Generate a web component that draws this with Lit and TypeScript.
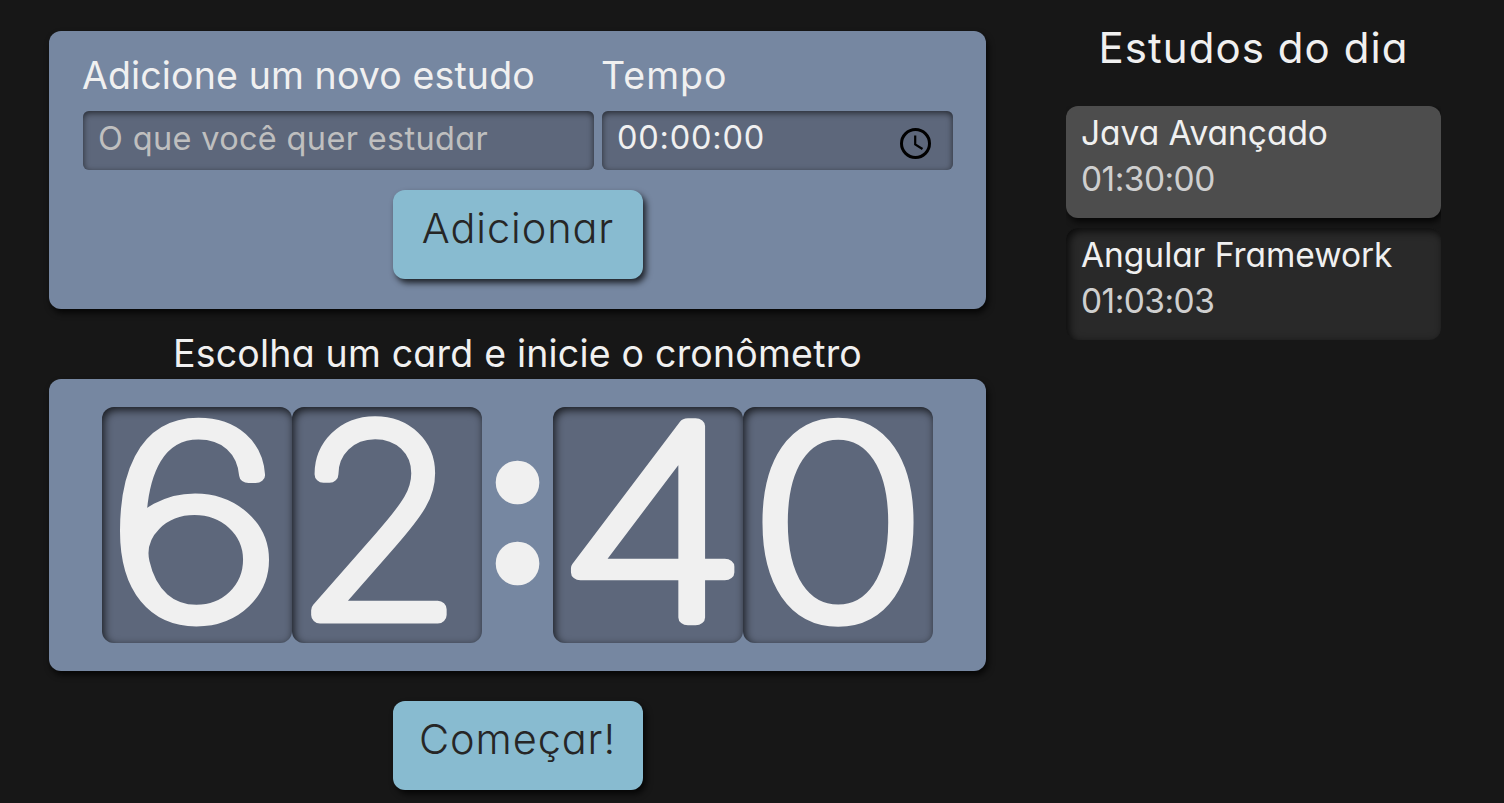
import { LitElement, html, css, svg } from "lit";
import { customElement, property, state } from "lit/decorators.js";

interface Study {
  name: string;
  time: string;
  selected: boolean;
}

// Horizontal centre, baseline, and x/y stretch of each numeral inside its tile.
const SHAPES: Record<string, [number, number, number, number]> = {
  "6": [92.5, 209, 1.2, 1],
  "2": [86.5, 208, 1.04, 1],
  "4": [99.5, 210.5, 1.25, 1.02],
  "0": [95, 209, 1.15, 1],
};

@customElement("clock-digit")
class ClockDigit extends LitElement {
  @property() value = "0";

  static styles = css`
    :host { display: block; width: 190px; height: 236px; border-radius: 12px; background: #5d677b; box-shadow: inset 2px 3px 8px rgba(0, 0, 0, 0.75); }
    svg { display: block; width: 190px; height: 236px; overflow: visible; }
    text { font-family: Inter, sans-serif; font-weight: 100; font-size: 258px; text-anchor: middle; fill: #f0f0f0; stroke: #f0f0f0; stroke-width: 17.5px; stroke-linejoin: round; vector-effect: non-scaling-stroke; }
  `;

  render() {
    const [cx, y, sx, sy] = SHAPES[this.value] ?? [95, 209, 1.1, 1];
    return html`<svg viewBox="0 0 190 236">${svg`<text transform="translate(${cx} ${y}) scale(${sx} ${sy})">${this.value}</text>`}</svg>`;
  }
}

@customElement("app-root")
class AppRoot extends LitElement {
  @state() studies: Study[] = [
    { name: "Java Avançado", time: "01:30:00", selected: true },
    { name: "Angular Framework", time: "01:03:03", selected: false },
  ];

  static styles = css`
    * { box-sizing: border-box; }
    :host { display: block; height: 803px; overflow: hidden; background: #171717; color: #f0f0f0; font-family: Inter, "Open Sans", sans-serif; font-weight: 400; font-feature-settings: "cv11", "calt" 0; }
    .page { display: flex; align-items: flex-start; gap: 80px; padding: 31px 63px 0 49px; }
    .main { width: 937px; display: flex; flex-direction: column; align-items: center; }
    .panel { width: 937px; border-radius: 12px; background: #7687a1; box-shadow: 2px 4px 6px rgba(0, 0, 0, 0.75); }
    .form { height: 278px; padding: 23px 33px 0 34px; display: flex; flex-direction: column; align-items: center; }
    .fields { width: 100%; display: grid; grid-template-columns: 511px 351px; column-gap: 8px; }
    .label { display: block; height: 57px; margin-left: -1px; line-height: 44px; font-size: 37.5px; letter-spacing: 0.13px; white-space: nowrap; }
    .l2 { letter-spacing: 1px; }
    .field { display: flex; height: 59px; border-radius: 6px; background: #5d677b; box-shadow: inset 0 2px 6px rgba(0, 0, 0, 0.6); padding: 0 22px 0 15px; }
    .input { flex: 1; min-width: 0; height: 55px; padding: 0; border: 0; outline: 0; background: none; color: #f0f0f0; font: inherit; font-size: 32.5px; letter-spacing: 0.33px; font-feature-settings: inherit; }
    .i2 { height: 53px; letter-spacing: 0.8px; }
    .input::placeholder { color: #bfbfbf; opacity: 1; }
    .clock { width: 31px; height: 31px; margin-top: 17px; }
    .button { width: 250px; height: 89px; padding: 0 0 14px; border: 0; border-radius: 12px; background: #88bbd0; color: #262626; box-shadow: 3px 4px 6px rgba(0, 0, 0, 0.75); font: inherit; font-weight: 300; font-size: 41.5px; letter-spacing: 0.9px; font-feature-settings: inherit; }
    .add { margin-top: 20px; }
    .start { margin-top: 30px; }
    .hint { margin: 0; height: 70px; padding-top: 20px; line-height: 50px; font-size: 37.5px; letter-spacing: 0.2px; font-weight: 400; white-space: nowrap; }
    .timer { height: 292px; display: flex; justify-content: center; padding-top: 28px; }
    .colon { width: 71px; height: 236px; overflow: visible; }
    .colon text { font-family: Inter, sans-serif; font-weight: 400; font-size: 205px; text-anchor: middle; fill: #f0f0f0; stroke: #f0f0f0; stroke-width: 16.5px; stroke-linejoin: round; }
    .side { width: 375px; }
    .title { margin: 0; height: 75px; line-height: 33px; font-size: 42px; letter-spacing: 1.05px; font-weight: 400; text-align: center; white-space: nowrap; }
    .list { display: flex; flex-direction: column; gap: 10px; overflow: hidden; }
    .study { height: 112px; padding: 4px 15px 0; border-radius: 12px; background: #292929; box-shadow: inset 3px 3px 8px rgba(0, 0, 0, 0.75); font-size: 33.5px; line-height: 46px; white-space: nowrap; }
    .selected { background: #4d4d4d; box-shadow: 2px 4px 6px rgba(0, 0, 0, 0.75); }
    .name { letter-spacing: -0.03px; }
    .time { color: #cfcfcf; letter-spacing: -0.55px; }
  `;

  render() {
    return html`
      <div class="page">
        <main class="main">
          <section class="panel form">
            <div class="fields">
              <label class="label l1">Adicione um novo estudo</label>
              <label class="label l2">Tempo</label>
              <div class="field"><input class="input i1" placeholder="O que você quer estudar" /></div>
              <div class="field">
                <input class="input i2" .value=${"00:00:00"} />
                <svg class="clock" viewBox="0 0 31 31" fill="none" stroke="#000">
                  <circle cx="15.5" cy="15.5" r="14" stroke-width="3" />
                  <path d="M15.2 7.5V16.5L22.5 21" stroke-width="2.2" />
                </svg>
              </div>
            </div>
            <button class="button add">Adicionar</button>
          </section>
          <h2 class="hint">Escolha um card e inicie o cronômetro</h2>
          <section class="panel timer">
            <clock-digit value="6"></clock-digit>
            <clock-digit value="2"></clock-digit>
            <svg class="colon" viewBox="0 0 71 236"><text x="35.5" y="169.3">:</text></svg>
            <clock-digit value="4"></clock-digit>
            <clock-digit value="0"></clock-digit>
          </section>
          <button class="button start">Começar!</button>
        </main>
        <aside class="side">
          <h2 class="title">Estudos do dia</h2>
          <div class="list">
            ${this.studies.map(
              (s) => html`<div class="study ${s.selected ? "selected" : ""}">
                <div class="name">${s.name}</div>
                <div class="time">${s.time}</div>
              </div>`
            )}
          </div>
        </aside>
      </div>
    `;
  }
}
